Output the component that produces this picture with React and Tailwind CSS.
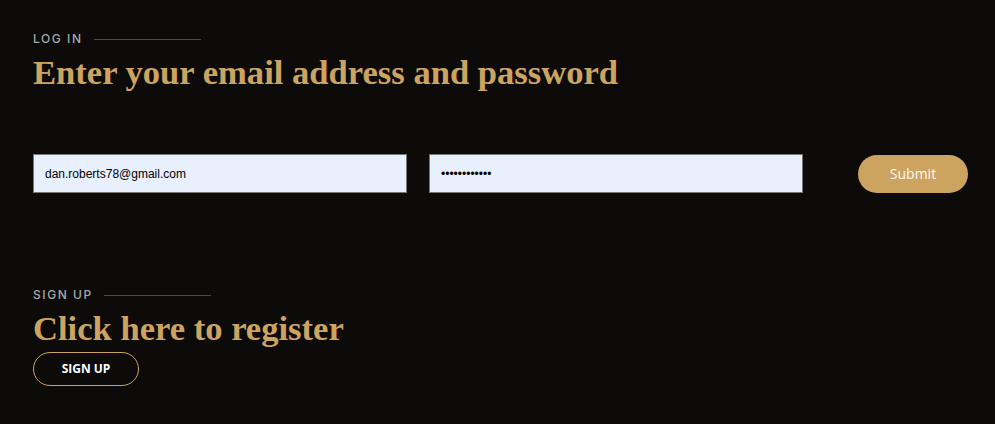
import React from 'react'

function SectionLabel({ text, lineWidth }) {
  return (
    <div className="flex items-center gap-[11px] h-[14px]">
      <span className="text-[12px] leading-none font-medium tracking-[0.13em] text-[#a8a8a8] [font-family:Inter,'Open_Sans',sans-serif]">
        {text}
      </span>
      <span className="h-px bg-[#4a4a4a]" style={{ width: lineWidth }} />
    </div>
  )
}

export default function App() {
  return (
    <div className="w-[995px] h-[424px] bg-[#0c0b0a] pl-[33px] pr-[27px] pt-[32px] overflow-hidden">
      <SectionLabel text="LOG IN" lineWidth={107} />
      <h1 className="mt-[6px] text-[34.6px] leading-[40px] font-bold text-[#cda45f] [font-family:'Liberation_Serif',serif]">
        Enter your email address and password
      </h1>

      <form className="mt-[62px] flex items-center" onSubmit={e => e.preventDefault()}>
        <input
          type="email"
          defaultValue="dan.roberts78@gmail.com"
          className="shrink-0 w-[374px] h-[39px] bg-[#e8f0fe] border border-[#767676] px-[11px] text-[12px] text-black [font-family:Arial,'Liberation_Sans',sans-serif] outline-none"
        />
        <input
          type="password"
          defaultValue="password1234"
          className="shrink-0 ml-[22px] w-[374px] h-[39px] bg-[#e8f0fe] border border-[#767676] px-[11px] text-[12px] text-black [font-family:Arial,'Liberation_Sans',sans-serif] outline-none"
        />
        <button
          type="submit"
          className="shrink-0 ml-[55px] w-[110px] h-[38px] rounded-full bg-[#cda45f] text-[#fdf8ee] text-[14px] font-medium [font-family:'Open_Sans',sans-serif]"
        >
          Submit
        </button>
      </form>

      <div className="mt-[95px]">
        <SectionLabel text="SIGN UP" lineWidth={107} />
        <h2 className="mt-[6px] text-[34.6px] leading-[40px] font-bold text-[#cda45f] [font-family:'Liberation_Serif',serif]">
          Click here to register
        </h2>
        <button className="mt-[4px] w-[106px] h-[34px] rounded-full border border-[#cda45f] text-white text-[12px] font-bold [font-family:'Open_Sans',sans-serif]">
          SIGN UP
        </button>
      </div>
    </div>
  )
}
